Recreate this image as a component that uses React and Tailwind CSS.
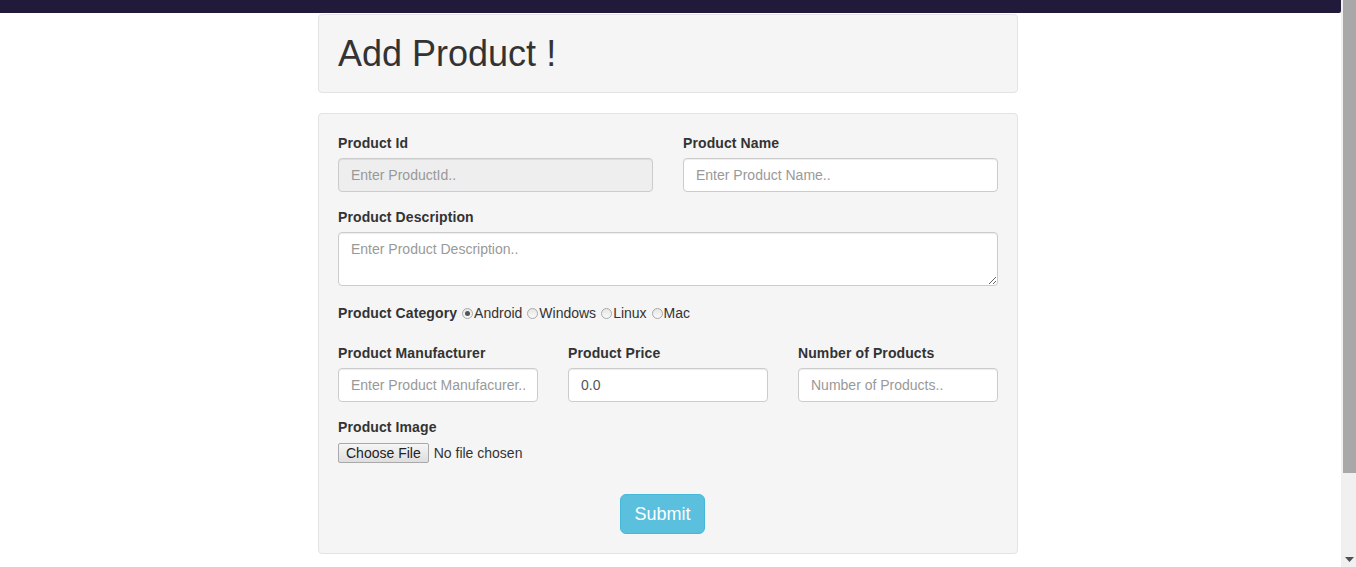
const font = { fontFamily: '"Liberation Sans", Arial, sans-serif' }

function Label({ children }) {
  return <label className="block h-5 leading-5 text-[14px] font-bold text-[#333] tracking-[0.1px] mb-[5px]">{children}</label>
}

function TextInput({ placeholder, value, disabled }) {
  return (
    <input
      type="text"
      placeholder={placeholder}
      defaultValue={value}
      disabled={disabled}
      className={
        "block w-full h-[34px] px-3 text-[14px] text-[#555] placeholder:text-[#999] border border-[#ccc] rounded-[4px] shadow-[inset_0_1px_1px_rgba(0,0,0,0.075)] outline-none " +
        (disabled ? "bg-[#eee]" : "bg-white")
      }
    />
  )
}

function Radio({ checked, label }) {
  return (
    <label className="inline-flex items-center">
      <span className="ml-[5px] mr-px inline-flex items-center justify-center w-[11px] h-[11px] rounded-full border border-[#a9a9a9] bg-gradient-to-b from-[#e6e6e6] to-[#fafafa]">
        {checked && <span className="w-[5px] h-[5px] rounded-full bg-[#555]" />}
      </span>
      {label}
    </label>
  )
}

export default function App() {
  return (
    <div className="flex h-[567px] overflow-hidden bg-white" style={font}>
      <div className="flex-1 min-w-0">
        <div className="h-[13px] bg-[#211a3b] rounded-br-[2px]" />

        <div className="ml-[318px] w-[700px] pt-px">
          <div className="h-[79px] bg-[#f5f5f5] border border-[#e3e3e3] rounded-[4px] px-[19px] pt-[19px]">
            <h1 className="text-[36px] leading-[40px] text-[#333]">Add Product !</h1>
          </div>

          <form className="mt-5 bg-[#f5f5f5] border border-[#e3e3e3] rounded-[4px] px-[19px] pt-[19px] pb-[19px]">
            <div className="grid grid-cols-2 gap-x-[30px] mb-[15px]">
              <div>
                <Label>Product Id</Label>
                <TextInput placeholder="Enter ProductId.." disabled />
              </div>
              <div>
                <Label>Product Name</Label>
                <TextInput placeholder="Enter Product Name.." />
              </div>
            </div>

            <div className="mb-[17px]">
              <Label>Product Description</Label>
              <textarea
                placeholder="Enter Product Description.."
                className="block w-full h-[54px] px-3 py-[6px] text-[14px] leading-5 text-[#555] placeholder:text-[#999] bg-white border border-[#ccc] rounded-[4px] shadow-[inset_0_1px_1px_rgba(0,0,0,0.075)] outline-none"
              />
            </div>

            <div className="h-5 leading-5 text-[14px] text-[#333] flex items-center mb-5">
              <span className="font-bold tracking-[0.1px]">Product Category</span>
              <Radio checked label="Android" />
              <Radio label="Windows" />
              <Radio label="Linux" />
              <Radio label="Mac" />
            </div>

            <div className="grid grid-cols-3 gap-x-[30px] mb-[15px]">
              <div>
                <Label>Product Manufacturer</Label>
                <TextInput placeholder="Enter Product Manufacurer.." />
              </div>
              <div>
                <Label>Product Price</Label>
                <TextInput value="0.0" />
              </div>
              <div>
                <Label>Number of Products</Label>
                <TextInput placeholder="Number of Products.." />
              </div>
            </div>

            <div>
              <label className="block h-5 leading-5 text-[14px] font-bold text-[#333] tracking-[0.1px] mb-[6px]">Product Image</label>
              <div className="flex items-center h-5 text-[14px] text-[#333]">
                <button
                  type="button"
                  className="h-5 px-[7px] leading-[18px] border border-[#a9a9a9] rounded-[2px] bg-gradient-to-b from-[#f6f6f6] to-[#dedede] text-[#222]"
                >
                  Choose File
                </button>
                <span className="ml-[5px]">No file chosen</span>
              </div>
            </div>

            <button
              type="submit"
              className="mt-[31px] ml-[282px] block w-[85px] h-10 rounded-[6px] bg-[#5bc0de] border border-[#46b8da] text-white text-[18px]"
            >
              Submit
            </button>
          </form>
        </div>
      </div>

      <div className="w-[15px] bg-[#f0f0f0] pl-[2px] flex flex-col">
        <div className="h-[473px] bg-[#a8a8a8]" />
        <div className="flex-1" />
        <div className="h-[16px] flex items-center justify-center">
          <svg width="9" height="5" viewBox="0 0 9 5">
            <path d="M0 0h9L4.5 5z" fill="#505050" />
          </svg>
        </div>
      </div>
    </div>
  )
}
